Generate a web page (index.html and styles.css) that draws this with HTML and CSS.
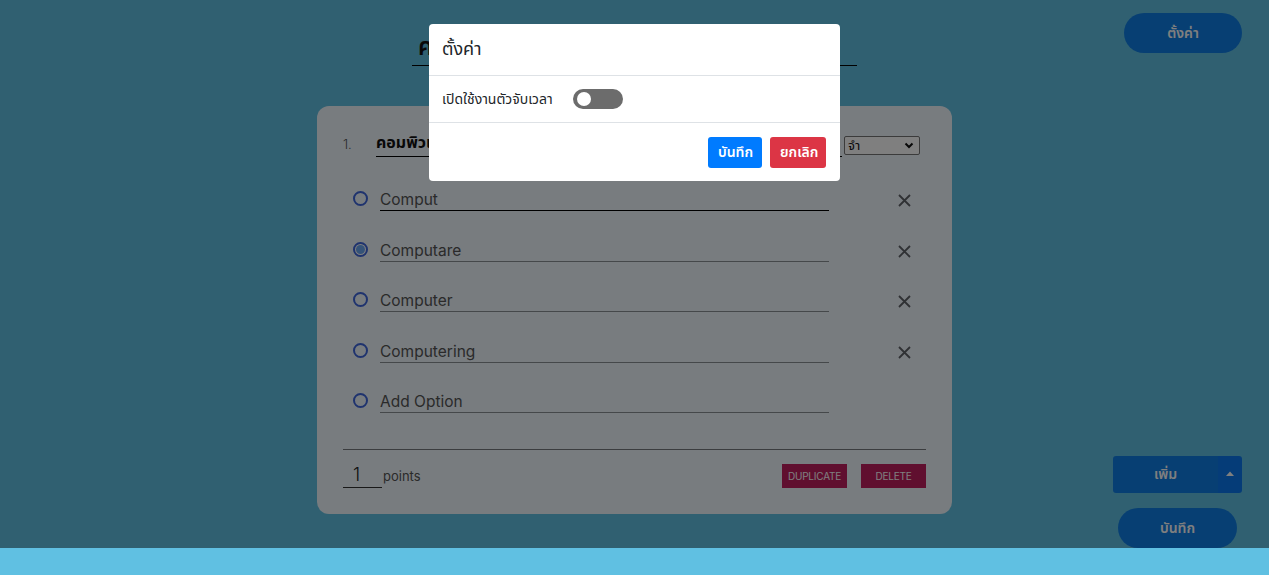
FILE: index.html
```html
<!DOCTYPE html>
<html lang="th">
<head>
<meta charset="utf-8">
<title>ตั้งค่า</title>
<link rel="stylesheet" href="styles.css">
</head>
<body>
<div class="page">
  <header class="top">
    <div class="spacer"></div>
    <div class="title">คอมพิวเตอร์เบื้องต้น</div>
    <div class="top-right"><button class="pill">ตั้งค่า</button></div>
  </header>

  <main class="card">
    <div class="q-row">
      <span class="q-num">1.</span>
      <div class="q-input">คอมพิวเตอร์คืออะไร</div>
      <div class="q-select"><span>จำ</span><svg width="10" height="7" viewBox="0 0 10 7"><path d="M1.5 1.5 L5 5 L8.5 1.5" fill="none" stroke="#111" stroke-width="2"/></svg></div>
    </div>

    <ul class="options">
      <li class="opt"><span class="radio"></span><div class="opt-input focus">Comput</div><svg class="x" width="13" height="13" viewBox="0 0 13 13"><path d="M1 1 L12 12 M12 1 L1 12" stroke="#5f6368" stroke-width="1.8"/></svg></li>
      <li class="opt"><span class="radio checked"></span><div class="opt-input">Computare</div><svg class="x" width="13" height="13" viewBox="0 0 13 13"><path d="M1 1 L12 12 M12 1 L1 12" stroke="#5f6368" stroke-width="1.8"/></svg></li>
      <li class="opt"><span class="radio"></span><div class="opt-input">Computer</div><svg class="x" width="13" height="13" viewBox="0 0 13 13"><path d="M1 1 L12 12 M12 1 L1 12" stroke="#5f6368" stroke-width="1.8"/></svg></li>
      <li class="opt"><span class="radio"></span><div class="opt-input">Computering</div><svg class="x" width="13" height="13" viewBox="0 0 13 13"><path d="M1 1 L12 12 M12 1 L1 12" stroke="#5f6368" stroke-width="1.8"/></svg></li>
      <li class="opt"><span class="radio"></span><div class="opt-input">Add Option</div></li>
    </ul>

    <hr class="divider">

    <div class="bottom-row">
      <div class="points"><span class="pts-input">1</span><span class="pts-label">points</span></div>
      <div class="card-actions">
        <button class="sq">DUPLICATE</button>
        <button class="sq">DELETE</button>
      </div>
    </div>
  </main>

  <div class="fab-col">
    <div class="split">
      <button class="split-main">เพิ่ม</button>
      <button class="split-caret"><svg width="8" height="5" viewBox="0 0 8 5"><path d="M0 5 L4 0.5 L8 5 Z" fill="#fff"/></svg></button>
    </div>
    <button class="pill save">บันทึก</button>
  </div>
</div>

<div class="backdrop"></div>

<div class="modal">
  <div class="modal-header">ตั้งค่า</div>
  <div class="modal-body">
    <span class="lbl">เปิดใช้งานตัวจับเวลา</span>
    <span class="toggle"><span class="knob"></span></span>
  </div>
  <div class="modal-footer">
    <button class="btn btn-primary">บันทึก</button>
    <button class="btn btn-danger">ยกเลิก</button>
  </div>
</div>
</body>
</html>
```

FILE: styles.css
```css
* { box-sizing: border-box; }
html, body { margin: 0; padding: 0; }
body {
  background: #60c0e2;
  font-family: Inter, "Noto Sans Thai", "Noto Sans Thai UI", "Noto Sans", "DejaVu Sans", sans-serif;
  height: 575px;
  overflow: hidden;
}
button { font-family: inherit; cursor: pointer; }

.page { height: 548px; position: relative; }

.top {
  display: grid;
  grid-template-columns: 1fr 445px 1fr;
  align-items: start;
  padding-top: 13px;
}
.title {
  margin-top: 13px;
  height: 40px;
  border-bottom: 1px solid #000;
  padding-left: 6px;
  font-size: 24px;
  line-height: 42px;
  font-weight: 600;
  color: #111;
  white-space: nowrap;
  overflow: hidden;
}
.top-right { display: flex; justify-content: flex-end; padding-right: 27px; }

.pill {
  width: 118px;
  height: 40px;
  border: none;
  border-radius: 20px;
  background: #0f7ee6;
  color: #fff;
  font-size: 14px;
  font-weight: 600;
}

.card {
  width: 635px;
  margin: 40px auto 0;
  background: #f0f8ff;
  border-radius: 12px;
  padding: 23px 26px 26px;
}

.q-row { display: flex; align-items: flex-end; height: 28px; }
.q-num { width: 33px; font-size: 13px; font-weight: 300; color: #555; align-self: center; padding-top: 2px; }
.q-input {
  width: 466px;
  height: 28px;
  border-bottom: 1px solid #000;
  font-size: 16px;
  font-weight: 700;
  color: #111;
  line-height: 26px;
  white-space: nowrap;
  overflow: hidden;
}
.q-select {
  width: 76px;
  height: 19px;
  margin-left: 2px;
  align-self: flex-start;
  margin-top: 7px;
  background: #fff;
  border: 1px solid #767676;
  border-radius: 2px;
  display: flex;
  align-items: center;
  justify-content: space-between;
  padding: 0 5px 0 3px;
  font-size: 13px;
  color: #111;
}

.options {
  list-style: none;
  margin: 29px 0 0;
  padding: 0;
  display: flex;
  flex-direction: column;
  gap: 25.5px;
}
.opt { display: flex; align-items: center; height: 25px; }
.radio {
  width: 15px;
  height: 15px;
  margin-left: 10px;
  border: 2px solid #3e66dc;
  border-radius: 50%;
  position: relative;
}
.radio.checked { background: #fff; }
.radio.checked::after {
  content: "";
  position: absolute;
  inset: 1px;
  border-radius: 50%;
  background: #6aa6f0;
}
.opt-input {
  width: 449px;
  height: 25px;
  margin-left: 12px;
  border-bottom: 1px solid #8a9094;
  font-size: 15.5px;
  line-height: 22px;
  padding-top: 3px;
  color: #555;
}
.opt-input.focus { border-bottom-color: #000; }
.x {
  margin-left: 69px;
  margin-top: 4px;
}

.divider {
  margin: 36px 0 0;
  border: none;
  border-top: 1px solid #777b7f;
}

.bottom-row {
  display: flex;
  justify-content: space-between;
  align-items: flex-end;
  margin-top: 13px;
}
.points { display: flex; align-items: flex-end; }
.pts-input {
  width: 39px;
  height: 25px;
  border-bottom: 1px solid #333;
  font-size: 18px;
  font-weight: 300;
  color: #222;
  padding-left: 10px;
  line-height: 24px;
}
.pts-label { font-size: 13px; color: #555; margin-left: 1px; padding-bottom: 4px; }
.card-actions { display: flex; gap: 14px; margin-bottom: 0; }
.sq {
  width: 65px;
  height: 24px;
  border: none;
  background: #c11e5e;
  color: #fff;
  font-size: 10px;
  padding: 0;
  letter-spacing: -0.2px;
}

.fab-col {
  position: fixed;
  right: 27px;
  bottom: 27px;
  width: 129px;
  display: flex;
  flex-direction: column;
  align-items: center;
  gap: 15px;
}
.split {
  display: flex;
  width: 129px;
  height: 37px;
  border-radius: 3px;
  overflow: hidden;
}
.split-main {
  flex: 1;
  border: none;
  background: #0f7ee6;
  color: #fff;
  font-size: 14px;
  font-weight: 600;
}
.split-caret {
  width: 24px;
  border: none;
  background: #0a78f0;
  display: flex;
  align-items: center;
  justify-content: center;
  padding: 0 0 2px;
}
.save { width: 119px; }

.backdrop {
  position: fixed;
  left: 0;
  top: 0;
  right: 0;
  height: 548px;
  background: rgba(0, 0, 0, 0.5);
}

.modal {
  position: fixed;
  top: 24px;
  left: 429px;
  width: 411px;
  background: #fff;
  border-radius: 4px;
  color: #212529;
}
.modal-header {
  height: 52px;
  padding: 0 13px;
  font-size: 18px;
  line-height: 50px;
  border-bottom: 1px solid #dee2e6;
}
.modal-body {
  height: 47px;
  padding: 0 13px;
  display: flex;
  align-items: center;
  border-bottom: 1px solid #dee2e6;
}
.lbl { font-size: 14px; width: 131px; }
.toggle {
  width: 50px;
  height: 20px;
  border-radius: 10px;
  background: #6c6c6c;
  position: relative;
}
.knob {
  position: absolute;
  left: 4px;
  top: 3px;
  width: 14px;
  height: 14px;
  border-radius: 50%;
  background: #fff;
}
.modal-footer {
  height: 58px;
  padding: 0 14px;
  display: flex;
  align-items: center;
  justify-content: flex-end;
  gap: 8px;
}
.btn {
  height: 31px;
  border: none;
  border-radius: 3px;
  color: #fff;
  font-size: 14px;
  font-weight: 600;
  padding: 0 10px;
}
.btn-primary { background: #007bff; width: 54px; }
.btn-danger { background: #dc3545; width: 56px; }
```
